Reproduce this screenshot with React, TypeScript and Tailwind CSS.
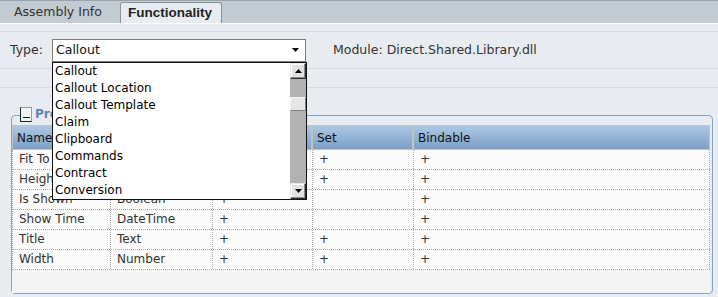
import React from 'react';

const items = ['Callout', 'Callout Location', 'Callout Template', 'Claim', 'Clipboard', 'Commands', 'Contract', 'Conversion'];

const columns = ['Name', 'Type', 'Get', 'Set', 'Bindable'];

const rows = [
  ['Fit To Screen', 'Boolean', '+', '+', '+'],
  ['Height', 'Number', '+', '+', '+'],
  ['Is Shown', 'Boolean', '+', '', '+'],
  ['Show Time', 'DateTime', '+', '', '+'],
  ['Title', 'Text', '+', '+', '+'],
  ['Width', 'Number', '+', '+', '+'],
];

const cols = 'grid grid-cols-[98px_102px_100px_101px_1fr]';

const ScrollButton: React.FC<{ up?: boolean }> = ({ up }) => (
  <div className="w-[16px] h-[16px] bg-[#e2e2e2] border border-t-[#e8e8e8] border-l-[#e8e8e8] border-r-[#303030] border-b-[#303030] shadow-[inset_-1px_-1px_0_#8a8a8a,inset_1px_1px_0_#ffffff] flex items-center justify-center">
    <svg width="7" height="4" viewBox="0 0 7 4">
      <path d={up ? 'M0 4h7L3.5 0z' : 'M0 0h7L3.5 4z'} fill="#000" />
    </svg>
  </div>
);

export default function App() {
  return (
    <div className="relative w-[718px] h-[297px] overflow-hidden bg-[#e8ecf0] text-[#333] font-['DejaVu_Sans',sans-serif] text-[12.5px]">
      {/* Tab strip */}
      <div className="h-[23px] bg-[#c2cad2] border-t border-[#9ba2aa] flex items-end pl-[14px]">
        <div className="h-[22px] flex items-center w-[106px] text-[#333]">Assembly Info</div>
        <div className="h-[21px] w-[102px] bg-[#e8ecf0] border border-b-0 border-[#8c939b] rounded-t-[3px] flex items-center pl-[7px] font-['Liberation_Sans',sans-serif] font-bold text-[13.5px] text-[#222]">
          Functionality
        </div>
      </div>
      <div className="h-[1px] bg-white" />

      {/* Header form rows */}
      <div className="h-[8px] border-b border-[#d6d8db]" />
      <div className="h-[37px] border-b border-[#d9dbde] flex items-center">
        <span className="w-[52px] pl-[10px]">Type:</span>
        <div className="w-[254px] h-[23px] bg-white border border-[#7c7c7c] flex items-center justify-between pl-[3px] pr-[6px] text-[#111]">
          <span className="text-[12.5px]">Callout</span>
          <svg width="7" height="4" viewBox="0 0 7 4">
            <path d="M0 0h7L3.5 4z" fill="#000" />
          </svg>
        </div>
        <span className="ml-[27px]">Module: Direct.Shared.Library.dll</span>
      </div>
      <div className="h-[19px] border-b border-[#d9dbde]" />

      {/* Properties group */}
      <div className="mt-[27px] ml-[11px] w-[702px] h-[179px] relative border border-[#84a2c3] rounded-[4px] flex flex-col pt-[9px] pr-[2px]">
        <div className="absolute left-[8px] top-[-11px] bg-[#e8ecf0] pr-[4px] flex items-center gap-[3px]">
          <div className="w-[12px] h-[15px] bg-[#f2f2f2] border border-l-[#222] border-b-[#222] border-t-[#9a9a9a] border-r-[#9a9a9a] flex items-end justify-center pb-[3px]">
            <div className="w-[7px] h-[1px] bg-[#111]" />
          </div>
          <span className="font-bold text-[12px] text-[#5b84b8]">Properties</span>
        </div>

        <div className="flex-1 bg-[#f4f4f4] flex flex-col">
          <div className={`${cols} h-[25px] bg-[#c4c4c4]`}>
            {columns.map((c) => (
              <div
                key={c}
                className="border border-[#c2c2c2] bg-gradient-to-b from-[#adc8e4] to-[#7a9fc7] flex items-center pl-[4px] text-[12px] text-[#111]"
              >
                {c}
              </div>
            ))}
          </div>
          <div className="bg-[#fafafa] border-l border-dotted border-[#a8a8a8]">
            {rows.map((r, i) => (
              <div key={i} className={`${cols} h-[20px] border-b border-dotted border-[#a8a8a8] text-[12px]`}>
                {r.map((v, j) => (
                  <div key={j} className="border-r border-dotted border-[#a8a8a8] pl-[6px] leading-[19px] whitespace-nowrap overflow-hidden">
                    {v}
                  </div>
                ))}
              </div>
            ))}
          </div>
        </div>
      </div>

      {/* Open dropdown list */}
      <div className="absolute left-[52px] top-[62px] w-[255px] h-[138px] bg-white border border-[#111] flex">
        <div className="flex-1 flex flex-col text-[12px] text-black">
          {items.map((it) => (
            <div key={it} className="h-[17px] leading-[17px] pl-[2px] whitespace-nowrap">
              {it}
            </div>
          ))}
        </div>
        <div className="w-[16px] bg-[#b2b2b2] flex flex-col">
          <ScrollButton up />
          <div className="h-[18px]" />
          <div className="w-[16px] h-[14px] bg-[#e6e6e6] border border-t-[#f4f4f4] border-l-[#f4f4f4] border-r-[#808080] border-b-[#808080]" />
          <div className="flex-1" />
          <ScrollButton />
        </div>
      </div>
    </div>
  );
}
